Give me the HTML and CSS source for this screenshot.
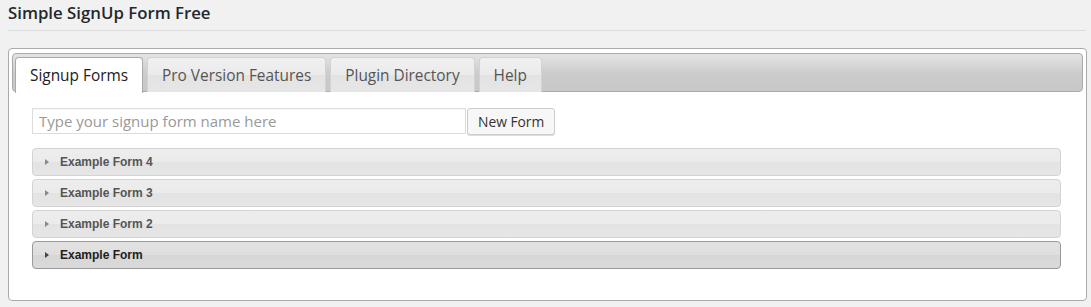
FILE: index.html
```html
<!DOCTYPE html>
<html lang="en">
<head>
    <meta charset="UTF-8">
    <title>Simple SignUp Form Free</title>
    <link rel="stylesheet" href="styles.css">
</head>
<body>
    <div class="wrap">
        <h2 class="page-title">Simple SignUp Form Free</h2>

        <div class="tabs">
            <ul class="tab-nav">
                <li class="tab active"><a href="#">Signup Forms</a></li>
                <li class="tab"><a href="#">Pro Version Features</a></li>
                <li class="tab"><a href="#">Plugin Directory</a></li>
                <li class="tab"><a href="#">Help</a></li>
            </ul>

            <div class="tab-panel">
                <div class="new-form">
                    <input type="text" class="form-name" placeholder="Type your signup form name here">
                    <button class="btn">New Form</button>
                </div>

                <div class="accordion">
                    <h3 class="acc-header"><span class="acc-icon"></span>Example Form 4</h3>
                    <h3 class="acc-header"><span class="acc-icon"></span>Example Form 3</h3>
                    <h3 class="acc-header"><span class="acc-icon"></span>Example Form 2</h3>
                    <h3 class="acc-header focus"><span class="acc-icon"></span>Example Form</h3>
                </div>
            </div>
        </div>
    </div>
</body>
</html>
```

FILE: styles.css
```css
body {
    margin: 0;
    background: #f1f1f1;
    font-family: 'Open Sans', sans-serif;
    color: #444;
}
.wrap {
    padding: 0 5px 0 8px;
}
.page-title {
    margin: 0;
    padding: 3px 0 7px;
    font-size: 16.8px;
    font-weight: 600;
    line-height: 20px;
    color: #23282d;
    border-bottom: 1px solid #dcdcdc;
}

/* tabs */
.tabs {
    margin-top: 17px;
    width: 1071px;
    padding: 4px 3px 3px;
    background: #fff;
    border: 1px solid #aaa;
    border-radius: 4px;
    font-size: 15.4px;
}
.tab-nav {
    list-style: none;
    margin: 0;
    padding: 3px 2px 0;
    display: flex;
    gap: 4px;
    height: 34px;
    border: 1px solid #aaa;
    border-radius: 4px;
    background: linear-gradient(#e4e4e4, #cbcbcb 55%, #c8c8c8);
}
.tab {
    border: 1px solid #d3d3d3;
    border-bottom: 0;
    border-radius: 4px 4px 0 0;
    background: linear-gradient(#f0f0f0 0%, #ebebeb 50%, #e3e3e3 51%, #e6e6e6 100%);
    height: 34px;
}
.tab a {
    display: block;
    padding: 7px 14px 0;
    line-height: 21px;
    color: #555;
    text-decoration: none;
}
.tab.active {
    background: #fff;
    border-color: #aaa;
    height: 35px;
}
.tab.active a {
    color: #212121;
}

.tab-panel {
    padding: 16px 22px 28px 20px;
}
.new-form {
    display: flex;
    align-items: flex-start;
}
.form-name {
    box-sizing: border-box;
    width: 434px;
    height: 26px;
    margin: 0;
    padding: 2px 6px;
    border: 1px solid #ddd;
    font-family: 'Open Sans', sans-serif;
    font-size: 15px;
    color: #333;
    box-shadow: inset 0 1px 2px rgba(0,0,0,0.04);
}
.form-name::placeholder {
    color: #999;
}
.btn {
    box-sizing: border-box;
    height: 27px;
    margin-left: 1px;
    padding: 0 10px;
    border: 1px solid #ccc;
    border-radius: 3px;
    background: #f7f7f7;
    font-family: 'Open Sans', sans-serif;
    font-size: 13.8px;
    color: #333;
    box-shadow: 0 1px 0 #ddd;
}

/* accordion */
.accordion {
    margin-top: 13px;
    display: flex;
    flex-direction: column;
    gap: 3px;
}
.acc-header {
    display: flex;
    align-items: center;
    box-sizing: border-box;
    height: 28px;
    margin: 0;
    padding: 0 0 0 12px;
    border: 1px solid #d3d3d3;
    border-radius: 4px;
    background: linear-gradient(#ededed 0%, #ebebeb 50%, #e3e3e3 51%, #e6e6e6 100%);
    font-family: 'Liberation Sans', Arial, sans-serif;
    font-size: 12px;
    font-weight: bold;
    color: #555;
}
.acc-header.focus {
    border-color: #999;
    background: linear-gradient(#e2e2e2 0%, #dedede 50%, #d6d6d6 51%, #dadada 100%);
    color: #212121;
}
.acc-icon {
    width: 0;
    height: 0;
    margin-right: 11px;
    border-top: 3px solid transparent;
    border-bottom: 3px solid transparent;
    border-left: 4px solid #888;
}
.acc-header.focus .acc-icon {
    border-left-color: #444;
}
```
